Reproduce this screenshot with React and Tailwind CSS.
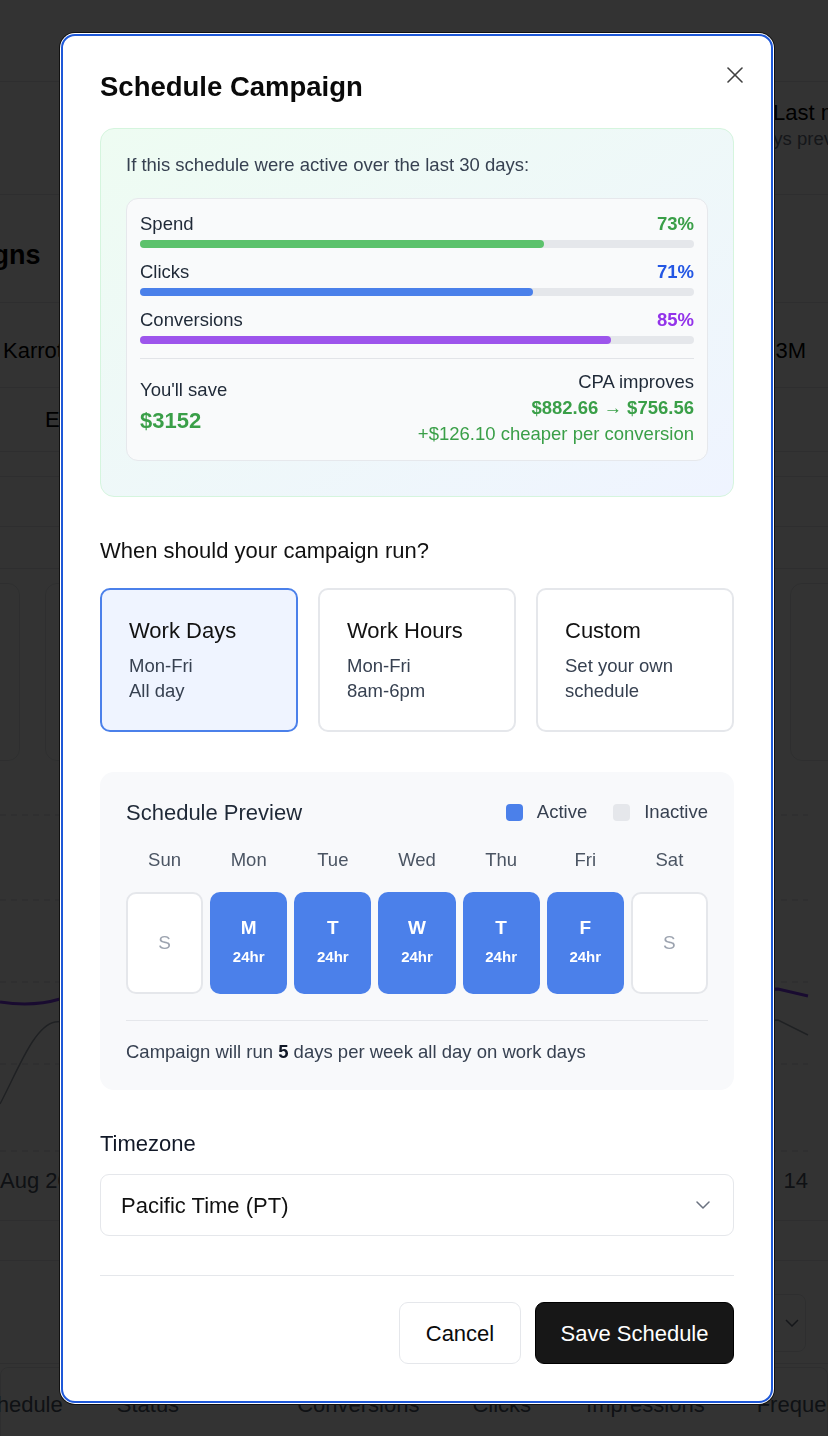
import React from "react";

const metrics = [
  { label: "Spend", pct: 73, text: "text-[#3a9f48]", bar: "bg-[#5cc26c]" },
  { label: "Clicks", pct: 71, text: "text-[#2457e4]", bar: "bg-[#4a80ea]" },
  { label: "Conversions", pct: 85, text: "text-[#9333ea]", bar: "bg-[#9d55ec]" },
];

const options = [
  { title: "Work Days", lines: ["Mon-Fri", "All day"], selected: true },
  { title: "Work Hours", lines: ["Mon-Fri", "8am-6pm"] },
  { title: "Custom", lines: ["Set your own", "schedule"] },
];

const days = [
  { name: "Sun", letter: "S", active: false },
  { name: "Mon", letter: "M", active: true },
  { name: "Tue", letter: "T", active: true },
  { name: "Wed", letter: "W", active: true },
  { name: "Thu", letter: "T", active: true },
  { name: "Fri", letter: "F", active: true },
  { name: "Sat", letter: "S", active: false },
];

function PageBehind() {
  return (
    <div className="h-[1436px] w-full overflow-hidden bg-white text-black">
      {/* top bar */}
      <div className="h-[82px] border-b border-gray-200" />

      {/* stats header */}
      <div className="flex h-[113px] flex-col whitespace-nowrap border-b border-gray-200 pt-[17px]">
        <div className="ml-[773px] text-[22px] leading-[28px]">Last month</div>
        <div className="ml-[727px] text-[18.5px] leading-[24px] text-gray-500">30 days previous</div>
      </div>

      {/* heading */}
      <div className="flex h-[108px] items-center whitespace-nowrap border-b border-gray-200 pt-[14px]">
        <h2 className="ml-[-105px] text-[27px] font-bold">Campaigns</h2>
      </div>

      {/* rows */}
      <div className="flex h-[85px] items-center justify-between whitespace-nowrap border-b border-gray-200 pt-[10px] text-[22px]">
        <span className="ml-[3px]">Karrot Spring Sale</span>
        <span className="mr-[22px]">$1.3M</span>
      </div>
      <div className="flex h-[64px] items-center whitespace-nowrap border-b border-gray-200 text-[22px]">
        <span className="ml-[45px]">Email</span>
      </div>
      <div className="h-[25px] border-b border-gray-200" />
      <div className="h-[50px] border-b border-gray-200" />
      <div className="h-[42px] border-b border-gray-200" />

      {/* cards */}
      <div className="mt-[14px] flex gap-[25px]">
        <div className="ml-[-120px] h-[178px] w-[140px] shrink-0 rounded-xl border border-gray-200" />
        <div className="h-[178px] w-[720px] shrink-0 rounded-xl border border-gray-200" />
        <div className="h-[178px] w-[200px] shrink-0 rounded-xl border border-gray-200" />
      </div>

      {/* chart */}
      <svg className="mt-[29px] block" width="828" height="370" viewBox="0 0 828 370">
        {[25, 110, 192, 274, 361].map((y) => (
          <line key={y} x1="0" y1={y} x2="808" y2={y} stroke="#d1d5db" strokeDasharray="6 5" />
        ))}
        <path d="M0 212 C20 215 40 215 60 209 L400 202 L778 199 L808 206" fill="none" stroke="#7c3aed" strokeWidth="3" />
        <path d="M0 314 C18 280 34 236 55 232 C70 230 80 236 90 240 L778 230 L808 245" fill="none" stroke="#9ca3af" strokeWidth="1.5" />
      </svg>

      <div className="flex h-[40px] items-center justify-between whitespace-nowrap text-[22px] text-gray-600">
        <span>Aug 20</span>
        <span className="mr-[20px]">14</span>
      </div>
      <div className="h-[21px] border-b border-gray-200" />
      <div className="h-[40px] border-b border-gray-200" />
      <div className="h-[103px] border-b border-gray-200 pt-[33px]">
        <div className="ml-[700px] flex h-[58px] w-[106px] items-center justify-end rounded-lg border border-gray-200 pr-[6px] text-gray-500">
          <svg width="14" height="8" viewBox="0 0 14 8" fill="none" stroke="currentColor" strokeWidth="1.5">
            <polyline points="1,1 7,7 13,1" />
          </svg>
        </div>
      </div>
      <div className="mt-[3px] h-[80px] rounded-lg border border-gray-200">
        <div className="flex h-[72px] items-center whitespace-nowrap text-[22px] text-gray-600">
          <span className="ml-[-30px]">Schedule</span>
          <span className="ml-[54px]">Status</span>
          <span className="ml-[118px]">Conversions</span>
          <span className="ml-[53px]">Clicks</span>
          <span className="ml-[55px]">Impressions</span>
          <span className="ml-[52px]">Frequency</span>
        </div>
      </div>
    </div>
  );
}

function ScheduleModal() {
  return (
    <div className="relative ml-[6px] mt-[34px] h-fit w-[712px] rounded-[14px] border-2 border-[#1e58d8] bg-white px-[37px] pb-[37px] pt-[37px] shadow-[0_0_0_1px_#ffffff,0_0_0_2px_#111111]">
      <button className="absolute right-[28px] top-[31px] text-[#404040]">
        <svg width="16" height="16" viewBox="0 0 16 16" fill="none" stroke="currentColor" strokeWidth="1.6" strokeLinecap="round">
          <line x1="1" y1="1" x2="15" y2="15" />
          <line x1="15" y1="1" x2="1" y2="15" />
        </svg>
      </button>

      <h1 className="text-[27.5px] font-bold leading-[28px] text-[#0a0a0a]">Schedule Campaign</h1>

      {/* Impact estimate */}
      <div className="mt-[27px] rounded-[14px] border border-[#d5f5de] bg-linear-to-br from-[#eefcf2] to-[#eff4ff] px-[25px] pb-[35px] pt-[24px]">
        <p className="text-[18.5px] leading-[24px] text-[#374151]">
          If this schedule were active over the last 30 days:
        </p>

        <div className="mt-[21px] rounded-[12px] border border-[#e6e8ec] bg-[#f9fafb] px-[13px] pb-[13px] pt-[13px]">
          {metrics.map((m, i) => (
            <div key={m.label} className={i > 0 ? "mt-3" : ""}>
              <div className="flex justify-between text-[18.5px] leading-[24px]">
                <span className="text-[#1f2937]">{m.label}</span>
                <span className={`font-bold ${m.text}`}>{m.pct}%</span>
              </div>
              <div className="mt-1 h-2 rounded-full bg-[#e5e7eb]">
                <div className={`h-2 rounded-full ${m.bar}`} style={{ width: `${m.pct}%` }} />
              </div>
            </div>
          ))}

          <div className="mt-[14px] flex items-start justify-between border-t border-[#e2e4e8] pt-[10px]">
            <div className="mt-[8px]">
              <div className="text-[18.5px] leading-[26px] text-[#1f2937]">You'll save</div>
              <div className="mt-[4px] text-[22px] font-bold leading-[28px] text-[#3a9f48]">$3152</div>
            </div>
            <div className="text-right text-[18.5px] leading-[26px]">
              <div className="text-[#1f2937]">CPA improves</div>
              <div className="font-bold text-[#3a9f48]">$882.66 → $756.56</div>
              <div className="text-[#3a9f48]">+$126.10 cheaper per conversion</div>
            </div>
          </div>
        </div>
      </div>

      {/* Preset options */}
      <h2 className="mt-[40px] text-[22px] leading-[28px] text-[#111111]">When should your campaign run?</h2>
      <div className="mt-[23px] grid grid-cols-3 gap-[20px]">
        {options.map((o) => (
          <div
            key={o.title}
            className={`rounded-[10px] border-2 pb-[27px] pl-[27px] pt-[27px] ${
              o.selected ? "border-[#4b80ea] bg-[#eff4ff]" : "border-[#e5e7eb] bg-white"
            }`}
          >
            <div className="text-[22px] leading-[28px] text-[#111111]">{o.title}</div>
            <div className="mt-[8px] text-[18.5px] leading-[25px] text-[#374151]">
              {o.lines.map((l) => (
                <div key={l}>{l}</div>
              ))}
            </div>
          </div>
        ))}
      </div>

      {/* Preview */}
      <div className="mt-[40px] rounded-[14px] bg-[#f8f9fb] px-[26px] pb-[26px] pt-[26px]">
        <div className="flex h-[28px] items-center justify-between">
          <span className="text-[22px] text-[#1f2937]">Schedule Preview</span>
          <div className="flex items-center text-[18.5px] text-[#374151]">
            <span className="h-[17px] w-[17px] rounded-[4px] bg-[#4b80ea]" />
            <span className="ml-[14px]">Active</span>
            <span className="ml-[26px] h-[17px] w-[17px] rounded-[4px] bg-[#e5e7eb]" />
            <span className="ml-[14px]">Inactive</span>
          </div>
        </div>

        <div className="mt-[22px] grid grid-cols-7 gap-[7px] text-center text-[18.5px] leading-[24px] text-[#4b5563]">
          {days.map((d) => (
            <div key={d.name}>{d.name}</div>
          ))}
        </div>

        <div className="mt-[20px] grid h-[102px] grid-cols-7 gap-[7px]">
          {days.map((d) =>
            d.active ? (
              <div
                key={d.name}
                className="flex flex-col items-center justify-center rounded-[10px] bg-[#4b80ea] pb-[3px] text-white"
              >
                <span className="text-[19px] font-bold leading-[24px]">{d.letter}</span>
                <span className="mt-[7px] text-[15px] font-bold leading-[20px]">24hr</span>
              </div>
            ) : (
              <div
                key={d.name}
                className="flex items-center justify-center rounded-[10px] border-2 border-[#e5e7eb] bg-white text-[19px] text-[#9ca3af]"
              >
                {d.letter}
              </div>
            )
          )}
        </div>

        <div className="mt-[26px] border-t border-[#e5e7eb] pt-[19px] text-[18.5px] leading-[24px] text-[#374151]">
          Campaign will run <span className="font-bold text-[#111827]">5</span> days per week all day on work days
        </div>
      </div>

      {/* Timezone */}
      <div className="mt-[40px] text-[22px] leading-[28px] text-[#111827]">Timezone</div>
      <div className="mt-[16px] flex h-[62px] items-center justify-between rounded-[9px] border border-[#e5e7eb] bg-white pl-[20px] pr-[23px]">
        <span className="text-[22px] text-[#111111]">Pacific Time (PT)</span>
        <svg width="14" height="8" viewBox="0 0 14 8" fill="none" stroke="#6b7280" strokeWidth="1.5" strokeLinecap="round" strokeLinejoin="round">
          <polyline points="1,1 7,7 13,1" />
        </svg>
      </div>

      {/* Footer */}
      <div className="mt-[39px] flex justify-end gap-[14px] border-t border-[#e5e7eb] pt-[26px]">
        <button className="h-[62px] w-[122px] rounded-[9px] border border-[#e5e7eb] bg-white text-[22px] text-[#0a0a0a]">
          Cancel
        </button>
        <button className="h-[62px] w-[199px] rounded-[9px] border border-black bg-[#171717] text-[22px] text-white">
          Save Schedule
        </button>
      </div>
    </div>
  );
}

export default function App() {
  return (
    <div className="relative font-['Liberation_Sans',Arial,sans-serif]">
      <PageBehind />
      <div className="fixed inset-0 flex justify-center bg-black/80">
        <ScheduleModal />
      </div>
    </div>
  );
}
